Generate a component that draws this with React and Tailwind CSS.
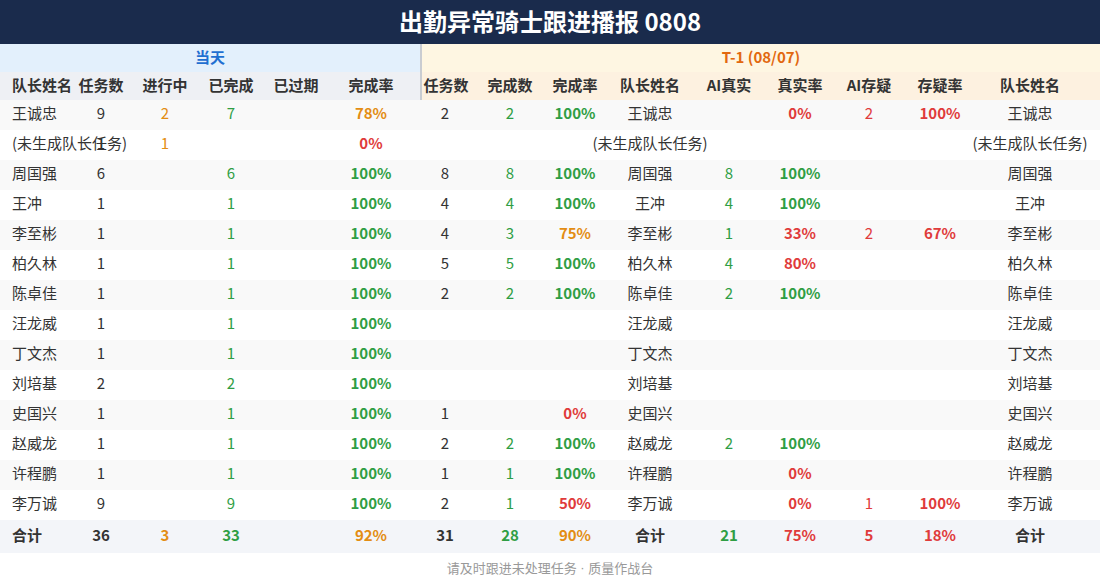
import React from "react";

const O = "text-[#e38d13]";
const G = "text-[#2f9e44]";
const R = "text-[#e03b3b]";
const K = "text-[#333333]";

const cols =
  "grid grid-cols-[72px_58px_70px_62px_68px_90px_50px_80px_50px_100px_58px_84px_54px_88px_92px_24px]";

// each cell: [text, colorClass, bold]
const n = (t, c = K) => [t, c, false];
const p = (t, c) => [t, c, true];
const e = ["", K, false];

const rows = [
  ["王诚忠", n("9"), n("2", O), n("7", G), e, p("78%", O), n("2"), n("2", G), p("100%", G), "王诚忠", e, p("0%", R), n("2", R), p("100%", R), "王诚忠"],
  ["(未生成队长任务)", n("1"), n("1", O), e, e, p("0%", R), e, e, e, "(未生成队长任务)", e, e, e, e, "(未生成队长任务)"],
  ["周国强", n("6"), e, n("6", G), e, p("100%", G), n("8"), n("8", G), p("100%", G), "周国强", n("8", G), p("100%", G), e, e, "周国强"],
  ["王冲", n("1"), e, n("1", G), e, p("100%", G), n("4"), n("4", G), p("100%", G), "王冲", n("4", G), p("100%", G), e, e, "王冲"],
  ["李至彬", n("1"), e, n("1", G), e, p("100%", G), n("4"), n("3", G), p("75%", O), "李至彬", n("1", G), p("33%", R), n("2", R), p("67%", R), "李至彬"],
  ["柏久林", n("1"), e, n("1", G), e, p("100%", G), n("5"), n("5", G), p("100%", G), "柏久林", n("4", G), p("80%", R), e, e, "柏久林"],
  ["陈卓佳", n("1"), e, n("1", G), e, p("100%", G), n("2"), n("2", G), p("100%", G), "陈卓佳", n("2", G), p("100%", G), e, e, "陈卓佳"],
  ["汪龙威", n("1"), e, n("1", G), e, p("100%", G), e, e, e, "汪龙威", e, e, e, e, "汪龙威"],
  ["丁文杰", n("1"), e, n("1", G), e, p("100%", G), e, e, e, "丁文杰", e, e, e, e, "丁文杰"],
  ["刘培基", n("2"), e, n("2", G), e, p("100%", G), e, e, e, "刘培基", e, e, e, e, "刘培基"],
  ["史国兴", n("1"), e, n("1", G), e, p("100%", G), n("1"), e, p("0%", R), "史国兴", e, e, e, e, "史国兴"],
  ["赵威龙", n("1"), e, n("1", G), e, p("100%", G), n("2"), n("2", G), p("100%", G), "赵威龙", n("2", G), p("100%", G), e, e, "赵威龙"],
  ["许程鹏", n("1"), e, n("1", G), e, p("100%", G), n("1"), n("1", G), p("100%", G), "许程鹏", e, p("0%", R), e, e, "许程鹏"],
  ["李万诚", n("9"), e, n("9", G), e, p("100%", G), n("2"), n("1", G), p("50%", R), "李万诚", e, p("0%", R), n("1", R), p("100%", R), "李万诚"],
];

const total = ["合计", p("36", K), p("3", O), p("33", G), e, p("92%", O), p("31", K), p("28", G), p("90%", O), "合计", p("21", G), p("75%", R), p("5", R), p("18%", R), "合计"];

const headers = ["队长姓名", "任务数", "进行中", "已完成", "已过期", "完成率", "任务数", "完成数", "完成率", "队长姓名", "AI真实", "真实率", "AI存疑", "存疑率", "队长姓名"];

function Cell({ cell, extra = "" }) {
  const [t, c, b] = cell;
  return (
    <div className={`flex justify-center items-center min-w-0 whitespace-nowrap ${c} ${b ? "font-bold" : ""} ${extra}`}>
      {t}
    </div>
  );
}

function Row({ r, bg, h, allBold }) {
  return (
    <div className={`${cols} ${bg} ${h} items-center text-[15px] pb-[3px]`}>
      <div className={`pl-3 whitespace-nowrap min-w-0 ${K} ${allBold ? "font-bold" : ""}`}>{r[0]}</div>
      {r.slice(1).map((c, i) => {
        if (typeof c === "string") {
          return (
            <div key={i} className={`flex justify-center whitespace-nowrap min-w-0 ${K} ${allBold ? "font-bold" : ""}`}>
              {c}
            </div>
          );
        }
        return <Cell key={i} cell={c} extra={i === 4 ? "pr-2" : ""} />;
      })}
      <div />
    </div>
  );
}

export default function App() {
  return (
    <div
      className="w-[1100px] h-[586px] bg-white overflow-hidden"
      style={{ fontFamily: '"Noto Sans CJK SC", "Noto Sans", sans-serif' }}
    >
      <div className="h-[44px] bg-[#1a2b4c] flex items-center justify-center text-white text-[24px] font-bold pb-[3px]">
        出勤异常骑士跟进播报 0808
      </div>
      <div className="flex h-[28px] text-[15px] font-bold">
        <div className="w-[420px] bg-[#e3f0fc] flex items-center justify-center text-[#1f6fd1] pb-[2px]">当天</div>
        <div className="flex-1 bg-[#fef6e2] border-l-2 border-[#c9ccd1] flex items-center justify-center text-[#e2680f] pb-[2px]">
          T-1 (08/07)
        </div>
      </div>
      <div className={`${cols} h-[28px] items-center text-[15px] font-bold text-[#333333]`}>
        <div className="pl-3 whitespace-nowrap h-full flex items-center bg-[#eef0f4] pb-[2px]">{headers[0]}</div>
        {headers.slice(1, 6).map((hd, i) => (
          <div key={i} className={`h-full flex items-center justify-center whitespace-nowrap bg-[#eef0f4] pb-[2px] ${i === 4 ? "pr-2" : ""}`}>
            {hd}
          </div>
        ))}
        {headers.slice(6).map((hd, i) => (
          <div
            key={i}
            className={`h-full flex items-center justify-center whitespace-nowrap bg-[#fdf1e0] pb-[2px] ${i === 0 ? "border-l-2 border-[#c9ccd1]" : ""}`}
          >
            {hd}
          </div>
        ))}
        <div className="h-full bg-[#fdf1e0]" />
      </div>
      {rows.map((r, i) => (
        <Row key={i} r={r} bg={i % 2 === 0 ? "bg-[#f9f9f9]" : "bg-white"} h="h-[30px]" />
      ))}
      <Row r={total} bg="bg-[#f3f5f9]" h="h-[33px]" allBold />
      <div className="h-[33px] flex items-center justify-center text-[13px] text-[#999999] pb-[4px]">
        请及时跟进未处理任务<span style={{ fontFamily: '"Liberation Sans", sans-serif' }}>&nbsp;·&nbsp;</span>质量作战台
      </div>
    </div>
  );
}
